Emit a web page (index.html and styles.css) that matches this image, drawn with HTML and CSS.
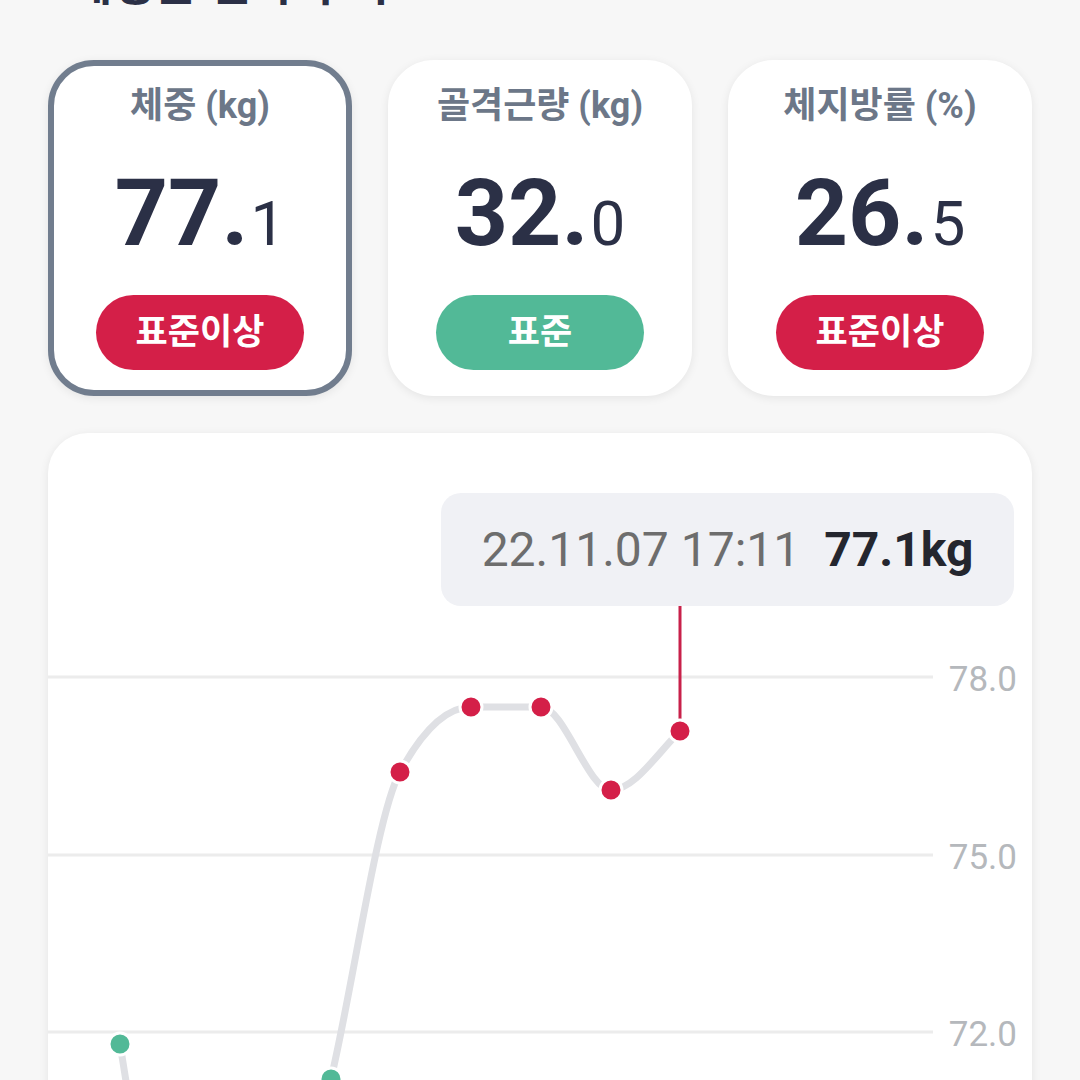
FILE: index.html
```html
<!DOCTYPE html>
<html lang="ko">
<head>
	<meta charset="UTF-8">
	<title>체성분 기록</title>
	<link rel="stylesheet" href="styles.css">
</head>
<body>
	<h1 class="page-title">체성분 변화 추이</h1>

	<section class="summary">
		<div class="stat selected">
			<p class="stat-name">체중 (kg)</p>
			<p class="stat-value"><b>77.</b><span>1</span></p>
			<div class="badge over">표준이상</div>
		</div>
		<div class="stat">
			<p class="stat-name">골격근량 (kg)</p>
			<p class="stat-value"><b>32.</b><span>0</span></p>
			<div class="badge normal">표준</div>
		</div>
		<div class="stat">
			<p class="stat-name">체지방률 (%)</p>
			<p class="stat-value"><b>26.</b><span>5</span></p>
			<div class="badge over">표준이상</div>
		</div>
	</section>

	<section class="chart">
		<div class="tip">
			<span class="tip-date">22.11.07 17:11</span>
			<b class="tip-value">77.1kg</b>
		</div>
		<svg class="plot" width="984" height="520" viewBox="0 0 984 520">
			<!-- grid -->
			<g stroke="#ececec" stroke-width="3">
				<line x1="0" y1="71" x2="885" y2="71"/>
				<line x1="0" y1="249" x2="885" y2="249"/>
				<line x1="0" y1="426" x2="885" y2="426"/>
			</g>
			<g class="axis" text-anchor="end">
				<text x="969" y="85">78.0</text>
				<text x="969" y="263">75.0</text>
				<text x="969" y="440">72.0</text>
			</g>
			<!-- marker for selected point -->
			<line x1="632" y1="0" x2="632" y2="125" stroke="#c8214a" stroke-width="3"/>
			<!-- trend line -->
			<path d="M72 438 C95 578 119 760 142 760 L213 760 C236 760 260 572 283 473 C306 375 329 208 352 166 C376 122 399 101 423 101 L493 101 C516 101 540 184 563 184 C586 184 609 148 632 125"
				fill="none" stroke="#dfe0e4" stroke-width="7" stroke-linecap="round"/>
			<g stroke="#fff" stroke-width="3">
				<circle cx="72" cy="438" r="11" fill="#52b997"/>
				<circle cx="283" cy="473" r="11" fill="#52b997"/>
				<circle cx="352" cy="166" r="11" fill="#d41f48"/>
				<circle cx="423" cy="101" r="11" fill="#d41f48"/>
				<circle cx="493" cy="101" r="11" fill="#d41f48"/>
				<circle cx="563" cy="184" r="11" fill="#d41f48"/>
				<circle cx="632" cy="125" r="11" fill="#d41f48"/>
			</g>
		</svg>
	</section>
</body>
</html>
```

FILE: styles.css
```css
*{
	margin: 0;
	padding: 0;
	box-sizing: border-box;
}
body{
	font-family: Roboto, "Noto Sans CJK KR", sans-serif;
	background-color: #f7f7f7;
	padding: 0 48px;
	overflow: hidden;
	height: 1080px;
}
.page-title{
	margin: -44px 0 0 22px;
	height: 56px;
	line-height: 56px;
	font-size: 46px;
	font-weight: 700;
	color: #2b3046;
}
.summary{
	margin-top: 48px;
	display: grid;
	grid-template-columns: repeat(3, 1fr);
	gap: 36px;
}
.stat{
	height: 336px;
	border: 6px solid #fff;
	border-radius: 46px;
	background-color: #fff;
	box-shadow: 0 2px 10px rgba(0, 0, 0, 0.08);
	padding: 22px 0 20px;
	display: flex;
	flex-direction: column;
	align-items: center;
}
.stat.selected{
	border-color: #717d8e;
}
.stat-name{
	font-size: 36px;
	line-height: 36px;
	font-weight: 700;
	color: #6c7788;
	white-space: nowrap;
}
.stat-value{
	margin-top: 43px;
	height: 98px;
	line-height: 1;
	color: #2b3046;
	white-space: nowrap;
}
.stat-value b{
	font-size: 93px;
	font-weight: 700;
}
.stat-value span{
	font-size: 62px;
	font-weight: 400;
	margin-left: 2px;
}
.badge{
	margin-top: 30px;
	width: 208px;
	height: 75px;
	border-radius: 38px;
	color: #fff;
	font-size: 35px;
	font-weight: 700;
	line-height: 75px;
	text-align: center;
}
.badge.over{
	background-color: #d41f48;
}
.badge.normal{
	background-color: #52b997;
}
.chart{
	margin-top: 37px;
	height: 720px;
	background-color: #fff;
	border-radius: 40px;
	box-shadow: 0 2px 10px rgba(0, 0, 0, 0.08);
	padding-top: 60px;
	overflow: hidden;
	display: flex;
	flex-direction: column;
}
.tip{
	align-self: flex-end;
	margin-right: 18px;
	width: 573px;
	height: 113px;
	border-radius: 20px;
	background-color: #f0f1f5;
	display: flex;
	align-items: center;
	justify-content: center;
	gap: 24px;
	font-size: 48px;
}
.tip-date{
	color: #6d6d6d;
}
.tip-value{
	color: #24262e;
	font-weight: 700;
}
.plot{
	display: block;
	flex-shrink: 0;
}
.axis{
	font-family: Roboto, sans-serif;
	font-size: 35px;
	fill: #b5b8bc;
}
```
